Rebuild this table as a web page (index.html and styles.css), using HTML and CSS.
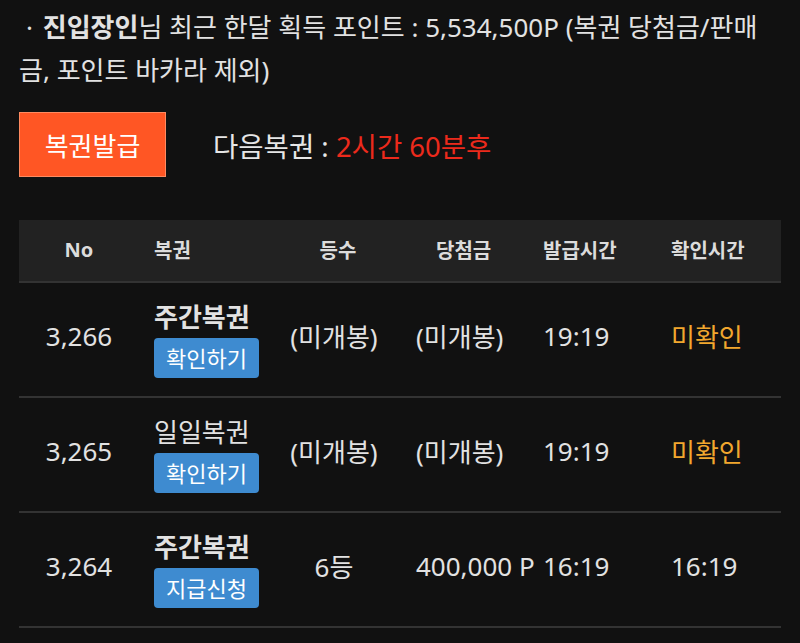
FILE: index.html
```html
<!DOCTYPE html>
<html lang="ko">
<head>
<meta charset="utf-8">
<link rel="stylesheet" href="styles.css">
</head>
<body>
<div class="page">
  <p class="info"><span class="dot">·</span> <b>진입장인</b>님 최근 한달 획득 포인트 : 5,534,500P (복권 당첨금/판매금, 포인트 바카라 제외)</p>
  <div class="issue">
    <button class="issue-btn">복권발급</button>
    <div class="next">다음복권 : <span class="red">2시간 60분후</span></div>
  </div>
  <div class="table">
    <div class="row head">
      <div class="c1">No</div>
      <div class="c2">복권</div>
      <div class="c3">등수</div>
      <div class="c4 h4">당첨금</div>
      <div class="c5">발급시간</div>
      <div class="c6">확인시간</div>
    </div>
    <div class="row">
      <div class="c1">3,266</div>
      <div class="c2"><div class="name bold">주간복권</div><span class="tag">확인하기</span></div>
      <div class="c3">(미개봉)</div>
      <div class="c4">(미개봉)</div>
      <div class="c5">19:19</div>
      <div class="c6 orange">미확인</div>
    </div>
    <div class="row">
      <div class="c1">3,265</div>
      <div class="c2"><div class="name">일일복권</div><span class="tag">확인하기</span></div>
      <div class="c3">(미개봉)</div>
      <div class="c4">(미개봉)</div>
      <div class="c5">19:19</div>
      <div class="c6 orange">미확인</div>
    </div>
    <div class="row">
      <div class="c1">3,264</div>
      <div class="c2"><div class="name bold">주간복권</div><span class="tag">지급신청</span></div>
      <div class="c3">6등</div>
      <div class="c4">400,000 P</div>
      <div class="c5">16:19</div>
      <div class="c6">16:19</div>
    </div>
  </div>
</div>
</body>
</html>
```
FILE: styles.css
```css
html, body {
  margin: 0;
  padding: 0;
  background: #111111;
}
body {
  font-family: "Noto Sans", "Noto Sans CJK KR", sans-serif;
  color: #e2e2e2;
}
.page {
  padding: 6px 18px 0 19px;
}
.info {
  margin: 0;
  font-size: 26px;
  line-height: 43px;
}
.dot {
  margin-left: 7px;
  margin-right: 3px;
}
.info b {
  font-weight: 700;
}
.issue {
  display: flex;
  align-items: center;
  margin-top: 20px;
}
.issue-btn {
  width: 147px;
  height: 65px;
  background: #ff5624;
  border: 1px solid #ff8a60;
  color: #ffffff;
  font-family: inherit;
  font-size: 26px;
  padding: 0;
}
.next {
  margin-left: 47px;
  font-size: 27.5px;
  color: #e6e6e6;
}
.red {
  color: #ec2a1c;
}
.table {
  margin-top: 43px;
  width: 762px;
}
.row {
  display: grid;
  grid-template-columns: 120px 141px 116px 147px 126px 112px;
  align-items: center;
  height: 113px;
  border-bottom: 2px solid #333333;
  font-size: 26px;
}
.row > div {
  padding-bottom: 8px;
}
.row > .c2 {
  padding-bottom: 0;
}
.row.head {
  height: 61px;
  background: #222222;
  font-size: 20px;
  font-weight: 700;
  color: #dcdcdc;
}
.row.head > div {
  padding-bottom: 2px;
}
.c1 { text-align: center; }
.c2 { text-align: left; padding-left: 15px; }
.c3 { text-align: center; padding-right: 8px; }
.row.head > .c3 { padding-right: 0; }
.c4 { padding-left: 20px; white-space: nowrap; }
.row.head > .h4 { padding-left: 40px; }
.c5 { text-align: left; }
.c6 { padding-left: 2px; }
.name {
  line-height: 30px;
  margin-bottom: 6px;
}
.bold {
  font-weight: 700;
}
.tag {
  display: inline-block;
  background: #3e8bd0;
  color: #ffffff;
  font-size: 22px;
  line-height: 40px;
  padding: 0 12px;
  border-radius: 4px;
}
.orange {
  color: #f2a72e;
}
```
